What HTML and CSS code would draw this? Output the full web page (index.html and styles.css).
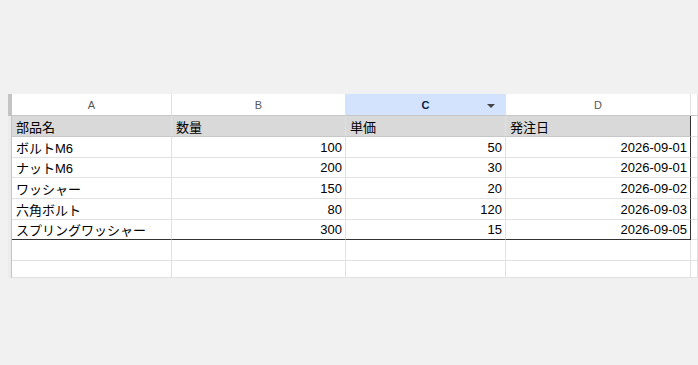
FILE: index.html
```html
<!DOCTYPE html>
<html lang="ja">
<head>
<meta charset="utf-8">
<title>Sheet</title>
<link rel="stylesheet" href="styles.css">
</head>
<body>
<div class="sheet">
  <div class="corner"></div>
  <div class="colhead">A</div>
  <div class="colhead">B</div>
  <div class="colhead selected">C<span class="caret"></span></div>
  <div class="colhead">D</div>
  <div class="colhead extra"></div>

  <div class="rowhead"></div>
  <div class="cell hdr">部品名</div>
  <div class="cell hdr">数量</div>
  <div class="cell hdr">単価</div>
  <div class="cell hdr edge-r">発注日</div>
  <div class="cell extra"></div>

  <div class="rowhead"></div>
  <div class="cell">ボルトM6</div>
  <div class="cell num">100</div>
  <div class="cell num">50</div>
  <div class="cell num edge-r">2026-09-01</div>
  <div class="cell extra"></div>

  <div class="rowhead"></div>
  <div class="cell">ナットM6</div>
  <div class="cell num">200</div>
  <div class="cell num">30</div>
  <div class="cell num edge-r">2026-09-01</div>
  <div class="cell extra"></div>

  <div class="rowhead"></div>
  <div class="cell">ワッシャー</div>
  <div class="cell num">150</div>
  <div class="cell num">20</div>
  <div class="cell num edge-r">2026-09-02</div>
  <div class="cell extra"></div>

  <div class="rowhead"></div>
  <div class="cell">六角ボルト</div>
  <div class="cell num">80</div>
  <div class="cell num">120</div>
  <div class="cell num edge-r">2026-09-03</div>
  <div class="cell extra"></div>

  <div class="rowhead"></div>
  <div class="cell edge-b">スプリングワッシャー</div>
  <div class="cell num edge-b">300</div>
  <div class="cell num edge-b">15</div>
  <div class="cell num edge-b edge-r">2026-09-05</div>
  <div class="cell extra"></div>

  <div class="rowhead"></div>
  <div class="cell"></div>
  <div class="cell"></div>
  <div class="cell"></div>
  <div class="cell"></div>
  <div class="cell extra"></div>

  <div class="rowhead"></div>
  <div class="cell"></div>
  <div class="cell"></div>
  <div class="cell"></div>
  <div class="cell"></div>
  <div class="cell extra"></div>
</div>
</body>
</html>
```
FILE: styles.css
```css
html, body {
  margin: 0;
  padding: 0;
  background: #f1f1f1;
}

body {
  font-family: "Liberation Sans", Arial, "Noto Sans CJK JP", sans-serif;
  font-size: 13px;
  color: #000;
}

.sheet {
  margin: 94px 0 0 8px;
  width: 690px;
  height: 184px;
  background: #fff;
  display: grid;
  grid-template-columns: 4px 160px 174px 160px 185px 7px;
  grid-template-rows: 22px 21px 21px 20px 21px 21px 20px 21px 17px;
  overflow: hidden;
}

.corner {
  background: #c4c4c4;
  border-bottom: 1px solid #c4c4c4;
}

.colhead {
  box-sizing: border-box;
  display: flex;
  align-items: center;
  justify-content: center;
  font-size: 11px;
  color: #575757;
  background: #fff;
  border-right: 1px solid #e1e1e1;
  border-bottom: 1px solid #c7c7c7;
  position: relative;
}

.colhead.selected {
  background: #d3e3fd;
  color: #041e49;
  font-weight: bold;
}

.caret {
  position: absolute;
  right: 10px;
  top: 10px;
  width: 0;
  height: 0;
  border-left: 4px solid transparent;
  border-right: 4px solid transparent;
  border-top: 4px solid #444;
}

.rowhead {
  background: #ececec;
  border-right: 1px solid #c4c4c4;
}

.cell {
  box-sizing: border-box;
  display: flex;
  align-items: center;
  padding: 0 3px 0 4px;
  white-space: nowrap;
  overflow: hidden;
  border-right: 1px solid #e1e1e1;
  border-bottom: 1px solid #e1e1e1;
  color: #000;
}

.cell.hdr {
  background: #d9d9d9;
  border-bottom-color: #c7c7c7;
}

.cell.num {
  justify-content: flex-end;
}

.cell.edge-r {
  border-right: 1px solid #333;
}

.cell.edge-b {
  border-bottom: 1px solid #333;
}

.cell.extra {
  padding: 0;
}
```
